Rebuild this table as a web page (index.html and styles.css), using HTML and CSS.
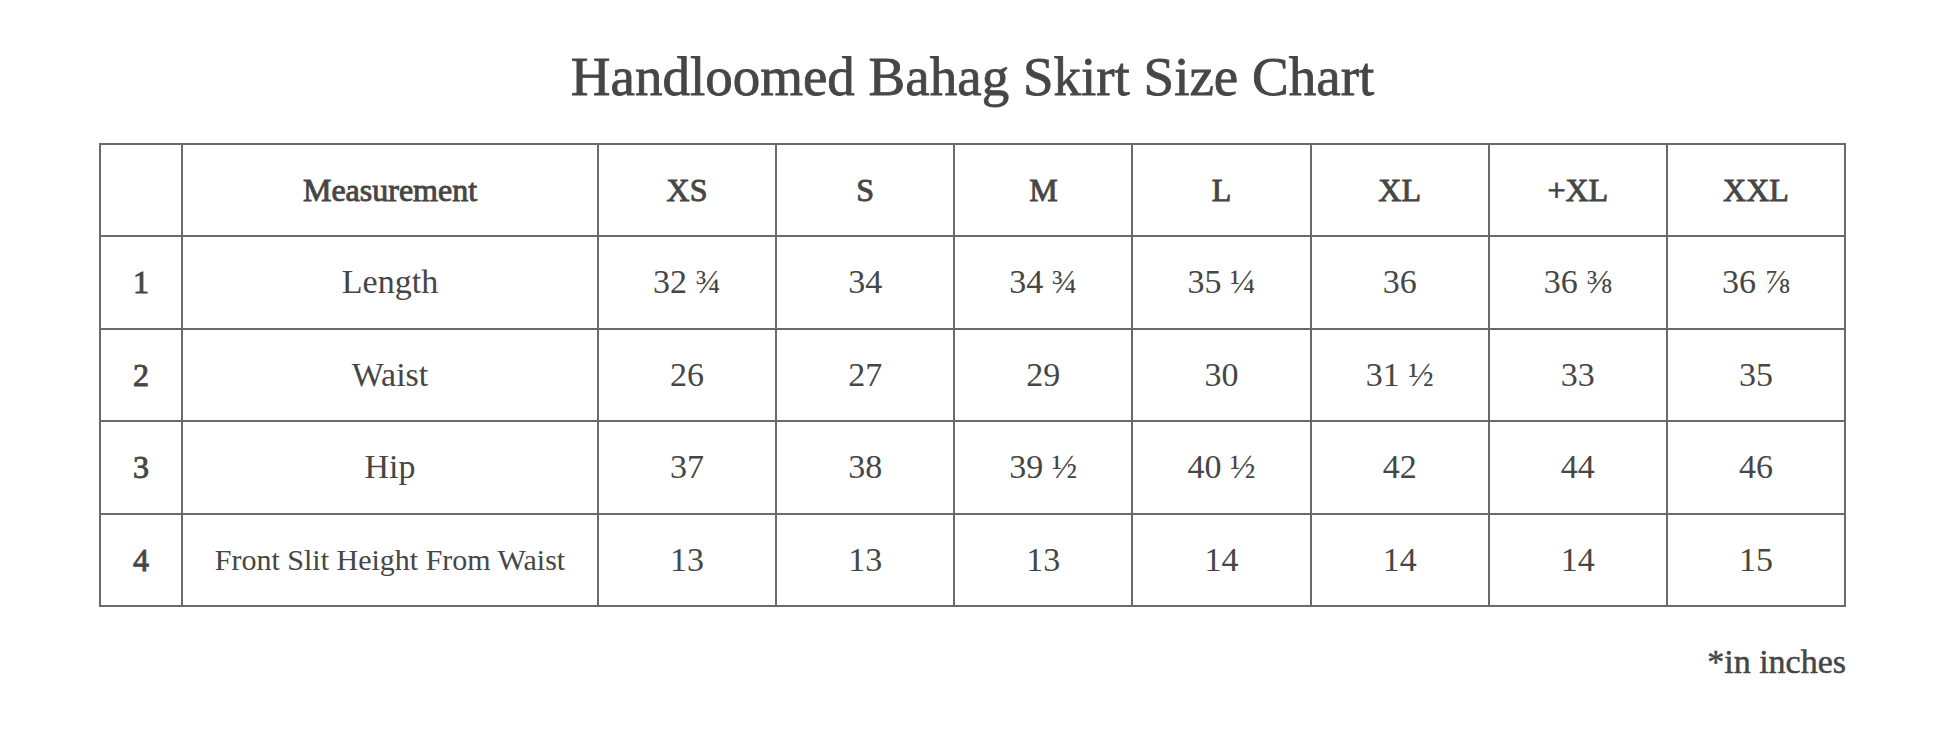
FILE: index.html
```html
<!DOCTYPE html>
<html lang="en">
<head>
<meta charset="utf-8">
<title>Handloomed Bahag Skirt Size Chart</title>
<link rel="stylesheet" href="styles.css">
</head>
<body>
<main class="page">
  <h1 class="title">Handloomed Bahag Skirt Size Chart</h1>
  <table class="chart">
    <colgroup>
      <col class="col-num">
      <col class="col-name">
      <col span="7">
    </colgroup>
    <thead>
      <tr>
        <th class="num"></th>
        <th>Measurement</th>
        <th>XS</th>
        <th>S</th>
        <th>M</th>
        <th>L</th>
        <th>XL</th>
        <th>+XL</th>
        <th>XXL</th>
      </tr>
    </thead>
    <tbody>
      <tr>
        <td class="num">1</td>
        <td>Length</td>
        <td>32 ¾</td>
        <td>34</td>
        <td>34 ¾</td>
        <td>35 ¼</td>
        <td>36</td>
        <td>36 ⅜</td>
        <td>36 ⅞</td>
      </tr>
      <tr>
        <td class="num">2</td>
        <td>Waist</td>
        <td>26</td>
        <td>27</td>
        <td>29</td>
        <td>30</td>
        <td>31 ½</td>
        <td>33</td>
        <td>35</td>
      </tr>
      <tr>
        <td class="num">3</td>
        <td>Hip</td>
        <td>37</td>
        <td>38</td>
        <td>39 ½</td>
        <td>40 ½</td>
        <td>42</td>
        <td>44</td>
        <td>46</td>
      </tr>
      <tr>
        <td class="num">4</td>
        <td class="small">Front Slit Height From Waist</td>
        <td>13</td>
        <td>13</td>
        <td>13</td>
        <td>14</td>
        <td>14</td>
        <td>14</td>
        <td>15</td>
      </tr>
    </tbody>
  </table>
  <p class="note">*in inches</p>
</main>
</body>
</html>
```
FILE: styles.css
```css
html, body {
  margin: 0;
  padding: 0;
  background: #ffffff;
}

body {
  font-family: "Liberation Serif", "Times New Roman", serif;
  color: #464646;
}

.page {
  width: 1747px;
  margin: 0 0 0 99px;
  padding-top: 49px;
}

.title {
  margin: 0 0 39px 0;
  font-size: 55px;
  line-height: 1;
  font-weight: 400;
  text-align: center;
  -webkit-text-stroke: 0.8px #464646;
}

.chart {
  width: 1747px;
  border-collapse: collapse;
  table-layout: fixed;
}

.col-num { width: 82px; }
.col-name { width: 416px; }

.chart th,
.chart td {
  border: 2px solid #6a6a6a;
  padding: 0;
  text-align: center;
  vertical-align: middle;
  line-height: 1;
}

.chart th {
  height: 90px;
  font-size: 32px;
  font-weight: 400;
  -webkit-text-stroke: 0.9px #464646;
}

.chart td {
  height: 90.6px;
  font-size: 34px;
  font-weight: 400;
}

.chart td.num {
  font-size: 32px;
  -webkit-text-stroke: 0.9px #464646;
}

.chart td.small {
  font-size: 30px;
}

.note {
  margin: 38px 0 0 0;
  font-size: 34px;
  line-height: 1;
  text-align: right;
  -webkit-text-stroke: 0.5px #464646;
}
```
